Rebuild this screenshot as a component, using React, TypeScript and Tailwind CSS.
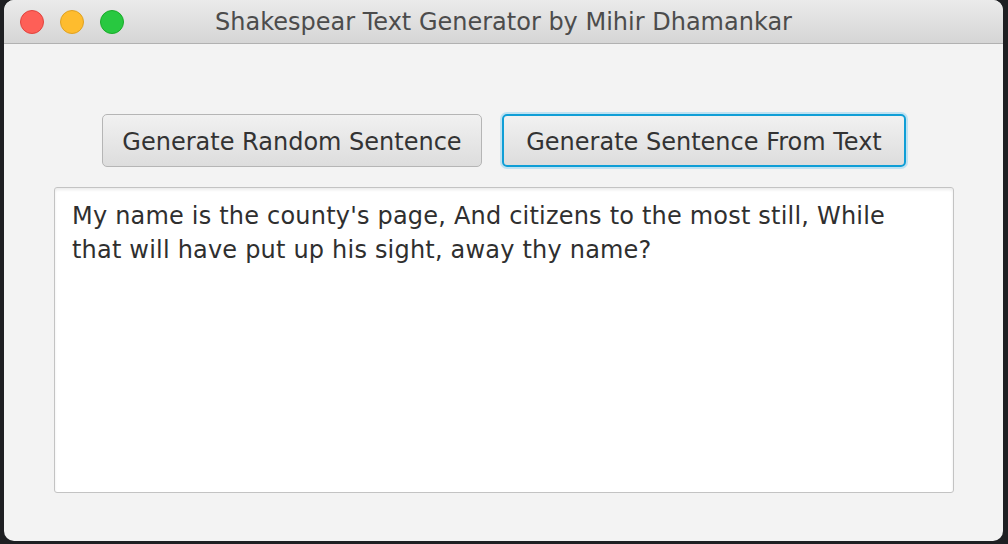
import React from 'react';

const SANS = "font-['DejaVu_Sans','Liberation_Sans',Arial,sans-serif]";

function TrafficLights() {
  return (
    <div className="flex items-center gap-4 pl-[16px]">
      <span className="w-6 h-6 rounded-full bg-[#fe5f57] border border-[#e0443e]" />
      <span className="w-6 h-6 rounded-full bg-[#febc2e] border border-[#dea123]" />
      <span className="w-6 h-6 rounded-full bg-[#28c840] border border-[#1aab29]" />
    </div>
  );
}

export default function App() {
  const [text, setText] = React.useState(
    "My name is the county's page, And citizens to the most still, While that will have put up his sight, away thy name?"
  );

  return (
    <div className={`w-[1008px] h-[544px] bg-[#1e1f22] flex ${SANS}`}>
      <div className="ml-[4px] mt-0 w-[999px] h-[541px] bg-[#f3f3f3] rounded-[10px] overflow-hidden flex flex-col">
        {/* title bar */}
        <div className="relative h-[44px] shrink-0 bg-gradient-to-b from-[#ebebeb] to-[#d5d5d5] border-b border-[#b1b1b1] flex items-center">
          <TrafficLights />
          <div className="absolute inset-0 flex items-center justify-center pt-[1px] text-[24px] text-[#4c4c4c]">
            Shakespear Text Generator by Mihir Dhamankar
          </div>
        </div>

        {/* buttons */}
        <div className="flex justify-center gap-[20px] pt-[70px] pl-[1px]">
          <button className="w-[380px] h-[53px] pt-[2px] rounded-[5px] border border-[#b5b5b5] bg-gradient-to-b from-[#f1f1f1] to-[#dddddd] text-[24px] text-[#333333]">
            Generate Random Sentence
          </button>
          <button className="w-[404px] h-[53px] pt-[2px] rounded-[5px] border-2 border-[#0f9ed6] ring-2 ring-[#bfe2f2] bg-gradient-to-b from-[#f1f1f1] to-[#dddddd] text-[24px] text-[#333333]">
            Generate Sentence From Text
          </button>
        </div>

        {/* text area */}
        <div className="pt-[20px] pl-[50px]">
          <textarea
            value={text}
            onChange={(e) => setText(e.target.value)}
            className="w-[900px] h-[306px] resize-none bg-white border border-[#c3c3c3] rounded-[3px] shadow-[inset_0_2px_3px_rgba(0,0,0,0.08)] pl-[17px] pr-[50px] pt-[11px] text-[24px] tracking-[0.2px] leading-[34px] text-[#2f2f2f] outline-none"
          />
        </div>
      </div>
    </div>
  );
}
